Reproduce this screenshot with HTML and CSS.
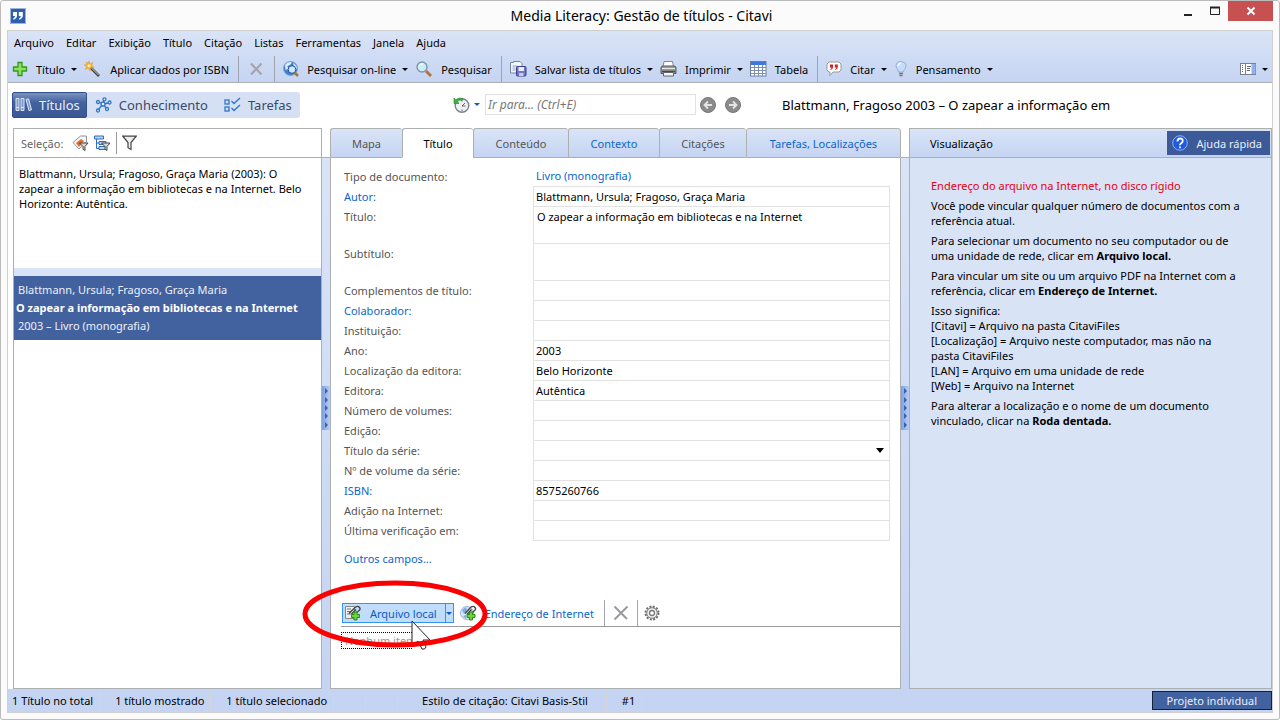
FILE: index.html
```html
<!DOCTYPE html>
<html lang="pt">
<head>
<meta charset="utf-8">
<title>Media Literacy: Gestão de títulos - Citavi</title>
<link rel="stylesheet" href="styles.css">
</head>
<body>
<div class="window">
  <header class="titlebar">
    <svg class="app-icon" width="16" height="16" viewBox="0 0 16 16"><rect x=".5" y=".5" width="15" height="15" fill="#2f5fae" stroke="#9fb4d8"/><path d="M3 4h4v3.500q0 3-3.500 4.300l-.3-1.200Q5 9.800 5 8H3zM8.800 4h4v3.500q0 3-3.500 4.300L9 10.600q1.800-.8 1.800-2.600h-2z" fill="#fff"/></svg>
    <h1 class="window-title">Media Literacy: Gestão de títulos - Citavi</h1>
    <div class="window-buttons">
      <button class="win-btn" aria-label="Minimizar"><svg width="12" height="12"><path d="M2 10h8" stroke="#222" stroke-width="2"/></svg></button>
      <button class="win-btn" aria-label="Maximizar"><svg width="12" height="12"><path d="M1.500 2v7.500h9V2M1 2.500h10" fill="none" stroke="#222"/><path d="M1 2.500h10" stroke="#222" stroke-width="2"/></svg></button>
      <button class="win-btn win-close" aria-label="Fechar"><svg width="10" height="10"><path d="M1.500 1.500l7 7M8.500 1.500l-7 7" stroke="#fff" stroke-width="2"/></svg></button>
    </div>
  </header>

  <div class="frame">
    <div class="bars">
      <nav class="menubar">
        <button class="menu">Arquivo</button><button class="menu">Editar</button><button class="menu">Exibição</button><button class="menu">Título</button><button class="menu">Citação</button><button class="menu">Listas</button><button class="menu">Ferramentas</button><button class="menu">Janela</button><button class="menu">Ajuda</button>
      </nav>
      <div class="toolbar">
        <button class="tool"><svg width="16" height="16"><path d="M6 1.500h4V6h4.500v4H10v4.500H6V10H1.500V6H6z" fill="#8fe05a" stroke="#2f9a1c" stroke-width="1.300"/></svg><span>Título</span><i class="caret"></i></button>
        <button class="tool"><svg width="18" height="16"><path d="M6 6l9 9" stroke="#444" stroke-width="2.600"/><path d="M6.500 6l8 8" stroke="#ccc"/><path d="M5 0l1 3 3-1.500L7.500 4.500 10 6 7 6.500 6 10 4.500 7 1 8.500 3 5.500 0 4l3-.8L2 1l2.500 1.200z" fill="#ffb21e" stroke="#e8862a" stroke-width=".4"/><circle cx="5" cy="4.700" r="1.500" fill="#fff6a0"/></svg><span>Aplicar dados por ISBN</span></button>
        <span class="sep"></span>
        <button class="tool tool-x" aria-label="Excluir"><svg width="14" height="14"><path d="M2 1.500l10.500 11M12.500 1.500L2 12.500" stroke="#a3a3a8" stroke-width="2"/></svg></button>
        <span class="sep"></span>
        <button class="tool"><svg width="16" height="16"><circle cx="7.500" cy="7.500" r="7" fill="#3f7fd0" stroke="#7fa4d6"/><path d="M2 4q3-4 7-2.500L7 4 4.500 5 5 8 2.500 9zM10 2q4 2 4 6l-3-2z" fill="#dcecfb"/><circle cx="9" cy="8.500" r="3.800" fill="#cfe8ff" stroke="#244f90"/><path d="M11.500 11.500l3.500 3.500" stroke="#a87a1f" stroke-width="2.500"/></svg><span>Pesquisar on-line</span><i class="caret"></i></button>
        <button class="tool"><svg width="18" height="16"><circle cx="7" cy="6" r="5" fill="#c9eefa" stroke="#8295a8" stroke-width="1.400"/><path d="M4 5q1-2.500 4-2" stroke="#fff" fill="none"/><path d="M11 10l5 5" stroke="#b57542" stroke-width="3"/></svg><span>Pesquisar</span></button>
        <span class="sep"></span>
        <button class="tool"><svg width="17" height="16"><path d="M.5 1.500h3v-1H10l2 2V12H.5z" fill="#f3f6fc" stroke="#7486a6"/><path d="M2.500 5h5M2.500 7h3M2.500 9h3" stroke="#8fa2c4"/><rect x="6.500" y="5.500" width="9.500" height="9.500" rx="1" fill="#7176c4" stroke="#3c3f86"/><path d="M8.500 6h5.500v4H8.500z" fill="#e9ecfa"/><path d="M9 12h4.500v3H9z" fill="#c8cbe8"/></svg><span>Salvar lista de títulos</span><i class="caret"></i></button>
        <button class="tool"><svg width="17" height="16"><path d="M4 .5h8.500l1 5.500H3z" fill="#fff" stroke="#888"/><path d="M1 7q0-2 2-2h11q2 0 2 2v5.500H1z" fill="#9a9da3" stroke="#55585e"/><path d="M2 7.500h13" stroke="#e6e6e6"/><path d="M2 10.500h13" stroke="#44474c" stroke-width="1.500"/><path d="M3.500 11.500h10V15h-10z" fill="#f4f4f4" stroke="#666"/><circle cx="13.500" cy="9" r=".9" fill="#3fd02e"/></svg><span>Imprimir</span><i class="caret"></i></button>
        <button class="tool"><svg width="17" height="16"><rect x=".5" y=".5" width="15.500" height="14.500" fill="#fff" stroke="#6e7f9d"/><path d="M1 1h15v3H1z" fill="#3d79dc"/><path d="M1 6.500h15M1 9.500h15M1 12.500h15M4.500 4v11M8.500 4v11M12.500 4v11" stroke="#7c8fae"/></svg><span>Tabela</span></button>
        <span class="sep"></span>
        <button class="tool"><svg width="16" height="16"><path d="M3 1h10l2 2v6l-2 2H7l-3 3.500V11H3L1 9V3z" fill="#fff" stroke="#999"/><path d="M4 3.500h3V6q0 2-2.300 3l-.5-.8Q5.500 7.500 5.500 6.500H4zM8.800 3.500h3V6q0 2-2.300 3L9 8.200q1.300-.7 1.300-1.700H8.800z" fill="#d22020"/></svg><span>Citar</span><i class="caret"></i></button>
        <button class="tool"><svg width="14" height="16"><path d="M4.500 11q0-2-1.800-3.500Q1 4 3 2t4-1.500T11 2t.3 5.500Q9.500 9 9.500 11z" fill="#c5dcfb" stroke="#94b2dd"/><path d="M4 5q.5-2.500 3-3" fill="none" stroke="#fff" stroke-width="1.500"/><path d="M5 12.500h4M5.500 14.500h3" stroke="#777" stroke-width="1.400"/></svg><span>Pensamento</span><i class="caret"></i></button>
        <button class="tool tool-end" aria-label="Layout"><svg width="16" height="12"><rect x=".5" y=".5" width="15" height="11" fill="#fff" stroke="#777f90"/><path d="M5.500 1v10" stroke="#777f90"/><path d="M2.500 2v8" stroke="#667" stroke-dasharray="1 1"/><path d="M7 3.500h4M7 5.500h3M7 7.500h3" stroke="#667"/><path d="M11.500 1h4v10h-4z" fill="#8fb2ea"/></svg><i class="caret"></i></button>
      </div>
    </div>

    <div class="navrow">
      <div class="workspaces">
        <button class="space space-on"><svg width="17" height="16"><path d="M1 1.500h3v12H1zM6 1.500h3v12H6zM11 2.500l2.500-.7 3 11-2.500.8z" fill="#7f9acb" stroke="#dce6f7"/><path d="M1 10.500h3M6 10.500h3" stroke="#dce6f7"/></svg><span>Títulos</span></button>
        <button class="space"><svg width="17" height="16" fill="#e8f1ff" stroke="#2f74c8" stroke-width="1.300"><path d="M8 7L3 5M8 7l1-4M8 7l6-1M8 7l4 5M8 7l-5 6" fill="none"/><circle cx="8" cy="7" r="2"/><circle cx="3" cy="5" r="1.500"/><circle cx="9.500" cy="2.300" r="1.500"/><circle cx="14.500" cy="5.500" r="1.500"/><circle cx="12" cy="12" r="1.500"/><circle cx="3" cy="13.500" r="1.500"/></svg><span>Conhecimento</span></button>
        <button class="space"><svg width="17" height="16" fill="none" stroke="#2f74c8" stroke-width="1.300"><rect x="1" y="3" width="4" height="4"/><rect x="1" y="10" width="4" height="4"/><path d="M7.500 4l2.500 2.500L16 1M7.500 11l2.500 2.500L16 8"/></svg><span>Tarefas</span></button>
      </div>
      <div class="goto">
        <button class="plain history" aria-label="Histórico"><svg width="17" height="16"><circle cx="9" cy="8.500" r="6.800" fill="#eef0f3" stroke="#7a828e" stroke-width="1.400"/><path d="M9 9l3-3M9 9h3.500M9 3v1.500M9 12.500V14" stroke="#555" stroke-width=".9"/><path d="M1 1l1.500 1.800Q6 0 10 1.500l-1 1.800Q6 2.500 4.500 4.500L6 6.500H1z" fill="#45b042" stroke="#23822a" stroke-width=".6"/></svg><i class="caret"></i></button>
        <input class="goto-input" type="text" placeholder="Ir para... (Ctrl+E)" aria-label="Ir para">
        <button class="plain" aria-label="Voltar"><svg width="16" height="16"><circle cx="8" cy="8" r="7.500" fill="#8b8b8b" stroke="#777"/><path d="M12 8H4.500M8 4.500L4.500 8 8 11.500" fill="none" stroke="#e4e4e4" stroke-width="1.800"/></svg></button>
        <button class="plain" aria-label="Avançar"><svg width="16" height="16"><circle cx="8" cy="8" r="7.500" fill="#8b8b8b" stroke="#777"/><path d="M4 8h7.500M8 4.500L11.500 8 8 11.500" fill="none" stroke="#e4e4e4" stroke-width="1.800"/></svg></button>
      </div>
      <h2 class="current">Blattmann, Fragoso 2003 – O zapear a informação em</h2>
    </div>

    <main class="panes">
      <section class="pane list-pane">
        <div class="list-tools">
          <span class="muted">Seleção:</span>
          <button class="plain" aria-label="Filtro de categoria"><svg width="17" height="16"><path d="M1 7.500L8.500 1h6v6L7 14z" fill="#f4f4f4" stroke="#8a94a6"/><path d="M4 8l5-4 3 2-5 6z" fill="#ea6a2a"/><path d="M7.500 8h8.500l-3 3.500v4l-2-1.200v-2.800z" fill="#d8d8d8" stroke="#444"/></svg></button>
          <button class="plain" aria-label="Filtro de estrutura"><svg width="17" height="16"><path d="M.500 1h9v3h-9z" fill="#bcd4f5" stroke="#2d6cc0"/><path d="M2.500 4v9.500H6M2.500 8H5" fill="none" stroke="#2d6cc0"/><path d="M5 6.500h7v3H5zM5 11.500h7v3H5z" fill="#bcd4f5" stroke="#2d6cc0"/><path d="M7.500 8h8.500l-3 3.500v4l-2-1.200v-2.800z" fill="#d8d8d8" stroke="#444"/></svg></button>
          <span class="sep-short"></span>
          <button class="plain" aria-label="Filtro"><svg width="15" height="16"><path d="M.800 1.200h13.400L9 7.500v7L6 12.700V7.500z" fill="#eee" stroke="#444" stroke-width="1.200"/></svg></button>
        </div>
        <p class="citation">Blattmann, Ursula; Fragoso, Graça Maria (2003): O zapear a informação em bibliotecas e na Internet. Belo Horizonte: Autêntica.</p>
        <div class="band"></div>
        <article class="record">
          <p>Blattmann, Ursula; Fragoso, Graça Maria</p>
          <p class="record-title">O zapear a informação em bibliotecas e na Internet</p>
          <p>2003 – Livro (monografia)</p>
        </article>
      </section>

      <div class="splitter"><div class="grip"><i></i><i></i><i></i><i></i><i></i></div></div>

      <section class="editor">
        <div class="tabs" role="tablist">
          <button class="tab" role="tab">Mapa</button><button class="tab tab-on" role="tab" aria-selected="true">Título</button><button class="tab" role="tab">Conteúdo</button><button class="tab blue" role="tab">Contexto</button><button class="tab" role="tab">Citações</button><button class="tab blue" role="tab">Tarefas, Localizações</button>
        </div>
        <div class="editor-body">
          <form class="fields">
            <span class="lab">Tipo de documento:</span><a class="type" href="#">Livro (monografia)</a>
            <label class="lab blue" for="f1">Autor:</label><input id="f1" value="Blattmann, Ursula; Fragoso, Graça Maria">
            <label class="lab" for="f2">Título:</label><textarea id="f2">O zapear a informação em bibliotecas e na Internet</textarea>
            <label class="lab" for="f3">Subtítulo:</label><textarea id="f3"></textarea>
            <label class="lab" for="f4">Complementos de título:</label><input id="f4">
            <label class="lab blue" for="f5">Colaborador:</label><input id="f5">
            <label class="lab" for="f6">Instituição:</label><input id="f6">
            <label class="lab" for="f7">Ano:</label><input id="f7" value="2003">
            <label class="lab" for="f8">Localização da editora:</label><input id="f8" value="Belo Horizonte">
            <label class="lab" for="f9">Editora:</label><input id="f9" value="Autêntica">
            <label class="lab" for="f10">Número de volumes:</label><input id="f10">
            <label class="lab" for="f11">Edição:</label><input id="f11">
            <label class="lab" for="f12">Título da série:</label><div class="pick"><select id="f12"><option></option></select></div>
            <label class="lab" for="f13">Nº de volume da série:</label><input id="f13">
            <label class="lab blue" for="f14">ISBN:</label><input id="f14" value="8575260766">
            <label class="lab" for="f15">Adição na Internet:</label><input id="f15">
            <label class="lab" for="f16">Última verificação em:</label><input id="f16" class="last">
          </form>
          <a class="more" href="#">Outros campos...</a>

          <div class="files">
            <div class="file-tools">
              <button class="local"><svg width="18" height="16"><path d="M1.500 1.500h9v12h-9z" fill="#eee" stroke="#888"/><path d="M3 4h4M3 6.500h4M3 9h4" stroke="#777"/><path d="M5 8.500l6.500-6.500q2.500-1.500 4 .5t-1 3.500L9 11M7.500 9L12 4.500" fill="none" stroke="#444" stroke-width="1.400"/><path d="M10 7h3v2.500h2.500v3H13V15h-3v-2.500H7.500v-3H10z" fill="#6fd13c" stroke="#2b8c17"/></svg><span>Arquivo local</span><b class="drop"><i class="caret caret-blue"></i></b></button>
              <button class="web"><svg width="17" height="16"><circle cx="7" cy="8" r="6.500" fill="#d7e8fa" stroke="#9ab3d0"/><path d="M2 5l4-3 1 3-3 4zM3 11l3-1v4z" fill="#7ea9df"/><path d="M5 8.500L11 2q2.500-1.500 4 .5t-1 3.500l-5 5M7 9.500L11.500 4.500" fill="none" stroke="#444" stroke-width="1.400"/><path d="M9.500 7h3v2.500H15v3h-2.500V15h-3v-2.500H7v-3h2.500z" fill="#6fd13c" stroke="#2b8c17"/></svg><span>Endereço de Internet</span></button>
              <span class="sep"></span>
              <button class="plain file-x" aria-label="Remover"><svg width="16" height="16"><path d="M1.500 1.500L14 14M14.500 1.500L1.500 14.500" stroke="#999ba0" stroke-width="2"/></svg></button>
              <span class="sep"></span>
              <button class="plain gear" aria-label="Opções"><svg width="16" height="16"><circle cx="8" cy="8" r="6.500" fill="none" stroke="#6d6d6d" stroke-width="2" stroke-dasharray="2 1.400"/><circle cx="8" cy="8" r="5.300" fill="#f0f0f0" stroke="#777"/><circle cx="8" cy="8" r="2.500" fill="#fff" stroke="#777" stroke-width="1.300"/></svg></button>
            </div>
            <div class="empty">Nenhum item</div>
            <svg class="cursor" width="22" height="32" viewBox="0 0 22 32"><path d="M1 1v25l6-5 4 8q3 1 4-2l-3-7h7z" fill="#fff" stroke="#222"/></svg>
            <svg class="ring" width="186" height="68"><ellipse cx="93" cy="34" rx="90" ry="31" fill="none" stroke="#fb0000" stroke-width="5"/></svg>
          </div>
        </div>
      </section>

      <div class="splitter"><div class="grip"><i></i><i></i><i></i><i></i><i></i></div></div>

      <aside class="pane help">
        <div class="help-head">
          <span>Visualização</span>
          <button class="quick"><svg width="16" height="16"><circle cx="8" cy="8" r="7.300" fill="#1d5be0" stroke="#8fb0f0"/><path d="M5.500 6.500q0-3 2.700-3t2.500 2.500q0 1.300-1.500 2.200T8 10.200M8 11.500v1.700" fill="none" stroke="#fff" stroke-width="1.800"/></svg><span>Ajuda rápida</span></button>
        </div>
        <div class="help-body">
          <p class="red">Endereço do arquivo na Internet, no disco rígido</p>
          <p>Você pode vincular qualquer número de documentos com a referência atual.</p>
          <p>Para selecionar um documento no seu computador ou de uma unidade de rede, clicar em <strong>Arquivo local.</strong></p>
          <p>Para vincular um site ou um arquivo PDF na Internet com a referência, clicar em <strong>Endereço de Internet.</strong></p>
          <p>Isso significa:<br>[Citavi] = Arquivo na pasta CitaviFiles<br>[Localização] = Arquivo neste computador, mas não na pasta CitaviFiles<br>[LAN] = Arquivo em uma unidade de rede<br>[Web] = Arquivo na Internet</p>
          <p>Para alterar a localização e o nome de um documento vinculado, clicar na <strong>Roda dentada.</strong></p>
        </div>
      </aside>
    </main>

    <footer class="status">
      <span class="first">1 Título no total</span><span>1 título mostrado</span><span>1 título selecionado</span><span class="blank"></span><span class="blank"></span><span class="style">Estilo de citação: Citavi Basis-Stil</span><span>#1</span>
      <button class="project">Projeto individual</button>
    </footer>
  </div>
</div>
</body>
</html>
```
FILE: styles.css
```css
* { box-sizing: border-box; }
body { margin: 0; background: #fff; }
body, button, input, textarea, select { font-family: "Noto Sans", "Open Sans", sans-serif; font-size: 11px; color: #000; }
h1, h2, p { margin: 0; font-weight: 400; }
button { background: none; border: 0; padding: 0; white-space: nowrap; display: flex; align-items: center; }
a { text-decoration: none; }
svg { display: block; flex: none; }

.window { display: flex; flex-direction: column; height: 100vh; padding: 0 6px 6px; background: #fbfbfb; border: 1px solid #bbb; border-radius: 3px; }
.titlebar { display: grid; grid-template-columns: 1fr auto 1fr; align-items: center; height: 29px; padding-left: 3px; }
.window-title { font-size: 14px; }
.window-buttons { display: flex; justify-content: flex-end; align-self: start; }
.win-btn { width: 27px; height: 20px; justify-content: center; }
.win-close { width: 45px; background: #c75050; }

.frame { flex: 1; display: flex; flex-direction: column; min-height: 0; border: 1px solid #cfcfcf; background: #fff; }
.bars { background: linear-gradient(#dae4f7, #c5d4f2); border-bottom: 1px solid #adb0b0; }
.menubar { display: flex; gap: 12px; height: 25px; padding: 0 6px 2px; }
.toolbar { display: flex; height: 26px; gap: 7px; padding: 0 4px; }
.tool { gap: 8px; }
.tool .caret { margin-left: -2px; }
.tool-x { padding: 0 2px; }
.tool-end { margin-left: auto; }
.sep { width: 1px; background: #a0a4ac; }
.toolbar .sep { margin: 0 1px 0 2px; }
.caret { width: 0; height: 0; border: 3px solid transparent; border-top-color: #000; border-bottom: 0; }

.navrow { display: grid; grid-template-columns: 441px 1fr 490px; align-items: center; height: 45px; padding: 0 0 2px 4px; }
.workspaces { display: flex; width: max-content; height: 26px; background: #d5e0f5; border-radius: 3px; }
.space { gap: 7px; padding: 0 8px; font-size: 13px; color: #3b4a66; }
.space-on { color: #e9effa; background: linear-gradient(#7b92c0, #42619f 40%, #3a5894); border: 1px solid #33508c; border-radius: 2px; padding: 0 6px 0 2px; }
.goto { display: flex; align-items: center; gap: 9px; }
.history { gap: 4px; margin-right: -4px; }
.history .caret { border-top-color: #0a5cc0; }
.goto-input { width: 211px; height: 21px; margin: 0 -5px 0 0; border: 1px solid #e3dfe3; padding: 0 2px; font-size: 12px; }
.goto-input::placeholder { color: #777; font-style: italic; opacity: 1; }
.current { font-size: 13px; }

.panes { flex: 1; min-height: 0; display: grid; grid-template-columns: 309px 8px 571fr 8px 363fr; padding-left: 5px; background: #fff; }
.pane { border: 1px solid #adb0b0; }
.list-pane { background: #fff; min-width: 0; }
.list-tools { display: flex; align-items: center; gap: 5px; height: 29px; padding-left: 7px; border-bottom: 1px solid #adb0b0; }
.muted { color: #666; margin-right: 4px; }
.sep-short { width: 1px; height: 22px; background: #999; }
.citation { height: 110px; padding: 8px 15px 8px 5px; line-height: 15px; }
.band { height: 8px; background: #d8e3f6; }
.record { padding: 5px 2px; height: 64px; line-height: 18px; background: #42619f; color: #edf1fa; white-space: nowrap; }
.record p { padding-left: 2px; }
.record .record-title { font-weight: 700; padding-left: 0; color: #fff; }

.splitter { margin-top: 29px; border-top: 1px solid #adb0b0; background: linear-gradient(#dae4f7, #c5d4f2); display: flex; align-items: flex-start; padding-top: 228px; }
.grip { display: grid; width: 8px; height: 44px; background: linear-gradient(90deg, #7ba0e4, #b9cdf2); justify-content: center; align-content: space-evenly; }
.grip i { border: 3px solid transparent; border-left-color: #3a5fae; border-right: 0; }

.editor { display: flex; flex-direction: column; min-width: 0; }
.tabs { display: grid; grid-template-columns: 72fr 71fr 95fr 91fr 87fr 155fr; height: 30px; }
.tab { justify-content: center; border: 1px solid #adb0b0; border-right-width: 0; border-radius: 3px 3px 0 0; background: linear-gradient(#dae4f7, #c5d4f2); color: #555; }
.tab:last-child { border-right-width: 1px; }
.tab-on { background: #fff; border-bottom-color: #fff; color: #000; }
.blue, .tab.blue, .lab.blue { color: #0a66cc; }
.editor-body { flex: 1; padding: 8px 0 0 10px; border: 1px solid #adb0b0; border-top: 0; background: #fff; }
.fields { display: grid; grid-template-columns: 189px 1fr; padding: 0 10px 0 3px; line-height: 20px; }
.lab { color: #555; line-height: 22px; height: 20px; }
.type { padding-left: 3px; color: #0a66cc; }
.fields input, .fields textarea, .fields select { width: 100%; height: 20px; margin: 0; padding: 0 2px; border: 1px solid #e2e2e2; border-bottom: 0; border-radius: 0; background: #fff; outline: 0; }
.fields textarea { display: block; height: 37px; resize: none; line-height: 20px; padding-left: 3px; }
.fields select { display: block; appearance: none; }
.fields .last { height: 21px; border-bottom: 1px solid #e2e2e2; }
.pick { position: relative; }
.pick::after { content: ""; position: absolute; right: 6px; top: 8px; border: 4px solid transparent; border-top: 5px solid #000; border-bottom: 0; pointer-events: none; }
.more { display: block; margin: 8px 0 0 3px; line-height: 20px; color: #0a66cc; }

.files { position: relative; margin-top: 31px; }
.file-tools { display: flex; align-items: center; height: 27px; border-bottom: 1px solid #999; padding-left: 1px; }
.file-tools .sep { height: 26px; }
.local { height: 20px; border: 1px solid #3394f5; background: #c0ddfb; color: #0a5cc8; gap: 8px; padding-left: 1px; }
.drop { display: flex; align-items: center; width: 8px; height: 18px; border-left: 1px solid #3394f5; }
.caret-blue { border-top-color: #0a5cc8; }
.web { gap: 8px; margin: 0 10px 0 6px; color: #0a66cc; }
.file-x { margin: 0 8px; }
.gear { margin-left: 6px; }
.empty { width: 71px; height: 17px; margin-top: 5px; padding-left: 3px; border: 1px dotted #000; border-right: 0; line-height: 16px; color: #999; white-space: nowrap; }
.cursor { position: absolute; left: 70px; top: 20px; }
.ring { position: absolute; left: -39px; top: -20px; }

.help { background: #d8e3f6; min-width: 0; }
.help-head { display: flex; align-items: center; justify-content: space-between; height: 29px; padding: 0 1px 0 20px; border-bottom: 1px solid #adb0b0; background: linear-gradient(#dae4f7, #c5d4f2); }
.quick { height: 24px; gap: 9px; padding: 0 8px 0 5px; background: #3c5a97; color: #e9effa; }
.help-body { display: grid; gap: 5px; padding: 20px 30px 0 21px; line-height: 15px; }
.red { color: #e60012; }

.status { display: flex; align-items: center; height: 23px; background: #c5d4f2; }
.status span { height: 18px; line-height: 18px; padding: 0 6px 0 15px; border-right: 1px solid #d6d6d6; }
.status .first { padding-left: 4px; }
.status .blank { width: 32px; }
.status .style { padding: 0 18px 0 24px; }
.project { height: 19px; margin-left: auto; padding: 0 14px; border: 1px solid #14203c; background: #42619f; color: #e9effa; }
```
